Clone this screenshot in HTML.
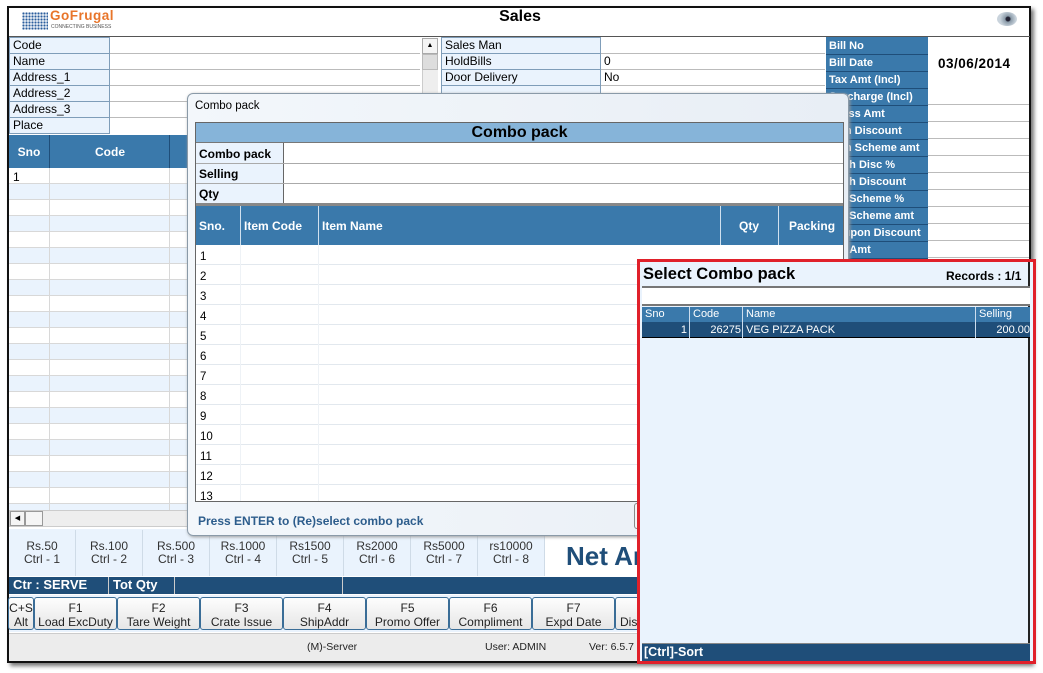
<!DOCTYPE html>
<html><head><meta charset="utf-8">
<style>
*{margin:0;padding:0;box-sizing:border-box}
body{width:1043px;height:673px;background:#fff;position:relative;overflow:hidden;font-family:"Liberation Sans",Tahoma,sans-serif;font-size:11px;color:#000}
.a{position:absolute}
.lb{position:absolute;background:#eaf3fd;border:1px solid #7f9db9;padding-left:3px;line-height:14px;font-size:12px}
.vl{position:absolute;background:#fff;border-bottom:1px solid #bbb;padding-left:3px;line-height:15px;font-size:12px}
.bl{position:absolute;background:#3a79ab;color:#fff;font-weight:bold;border-bottom:1px solid #1f4e79;padding-left:3px;line-height:16px;font-size:11px;white-space:nowrap;overflow:hidden}
.hdr{background:#3a79ab;color:#fff;font-weight:bold}
.den{position:absolute;width:67px;text-align:center;color:#333;font-size:12px;line-height:13px;border-right:1px solid #cfdbe7;height:46px;top:530px;padding-top:10px}
.fk{position:absolute;top:597px;height:33px;border:1px solid #3a6d97;border-radius:3px;background:linear-gradient(#fdfdfd,#e6e6e6);text-align:center;font-size:12px;line-height:14px;padding-top:3px;color:#222;white-space:nowrap;overflow:hidden}
</style></head><body>
<div class="a" style="left:7px;top:6px;width:1024px;height:657px;border:2px solid #111;box-shadow:3px 3px 4px #777;background:#fff"></div>
<div class="a" style="left:22px;top:12px;width:26px;height:18px;background:radial-gradient(circle,#2b5d9c 1px,transparent 1.3px) 0 0/3px 3px"></div>
<div class="a" style="left:50px;top:8px;color:#e8752a;font-weight:bold;font-size:13.5px;letter-spacing:0.5px">GoFrugal</div>
<div class="a" style="left:51px;top:24px;color:#555;font-size:5px">CONNECTING BUSINESS</div>
<div class="a" style="left:480px;top:8px;width:80px;text-align:center;font-weight:bold;font-size:16px">Sales</div>
<div class="a" style="left:997px;top:12px;width:20px;height:14px;border-radius:50%;background:radial-gradient(circle at 55% 50%,#223 2px,#8a9aa8 3px,#c9d3dc 8px)"></div>
<div class="a" style="left:9px;top:36px;width:1021px;height:1px;background:#555"></div>
<div class="lb" style="left:9px;top:37px;width:101px;height:17px">Code</div>
<div class="lb" style="left:9px;top:53px;width:101px;height:17px">Name</div>
<div class="lb" style="left:9px;top:69px;width:101px;height:17px">Address_1</div>
<div class="lb" style="left:9px;top:85px;width:101px;height:17px">Address_2</div>
<div class="lb" style="left:9px;top:101px;width:101px;height:17px">Address_3</div>
<div class="lb" style="left:9px;top:117px;width:101px;height:17px">Place</div>
<div class="a" style="left:110px;top:53px;width:310px;height:1px;background:#bbb"></div>
<div class="a" style="left:110px;top:69px;width:310px;height:1px;background:#bbb"></div>
<div class="a" style="left:110px;top:85px;width:310px;height:1px;background:#bbb"></div>
<div class="a" style="left:110px;top:101px;width:310px;height:1px;background:#bbb"></div>
<div class="a" style="left:110px;top:117px;width:310px;height:1px;background:#bbb"></div>
<div class="a" style="left:422px;top:38px;width:16px;height:96px;background:#eee;border-left:1px solid #ccc"></div>
<div class="a" style="left:422px;top:38px;width:16px;height:16px;background:#f4f4f4;border:1px solid #aaa;font-size:7px;text-align:center;line-height:14px">▲</div>
<div class="a" style="left:422px;top:54px;width:16px;height:16px;background:#ddd;border:1px solid #bbb"></div>
<div class="lb" style="left:441px;top:37px;width:160px;height:17px">Sales Man</div>
<div class="lb" style="left:441px;top:53px;width:160px;height:17px">HoldBills</div>
<div class="lb" style="left:441px;top:69px;width:160px;height:17px">Door Delivery</div>
<div class="lb" style="left:441px;top:85px;width:160px;height:17px"></div>
<div class="vl" style="left:601px;top:38px;width:224px;height:16px"></div>
<div class="vl" style="left:601px;top:54px;width:224px;height:16px">0</div>
<div class="vl" style="left:601px;top:70px;width:224px;height:16px">No</div>
<div class="a" style="left:826px;top:37px;width:102px;height:230px;background:#3a79ab"></div>
<div class="bl" style="left:826px;top:38px;width:102px;height:17px">Bill No</div>
<div class="bl" style="left:826px;top:55px;width:102px;height:17px">Bill Date</div>
<div class="bl" style="left:826px;top:72px;width:102px;height:17px">Tax Amt (Incl)</div>
<div class="bl" style="left:826px;top:89px;width:102px;height:17px">Surcharge (Incl)</div>
<div class="bl" style="left:826px;top:106px;width:102px;height:17px">Gross Amt</div>
<div class="bl" style="left:826px;top:123px;width:102px;height:17px">Item Discount</div>
<div class="bl" style="left:826px;top:140px;width:102px;height:17px">Item Scheme amt</div>
<div class="bl" style="left:826px;top:157px;width:102px;height:17px">Cash Disc %</div>
<div class="bl" style="left:826px;top:174px;width:102px;height:17px">Cash Discount</div>
<div class="bl" style="left:826px;top:191px;width:102px;height:17px">Bill Scheme %</div>
<div class="bl" style="left:826px;top:208px;width:102px;height:17px">Bill Scheme amt</div>
<div class="bl" style="left:826px;top:225px;width:102px;height:17px">Coupon Discount</div>
<div class="bl" style="left:826px;top:242px;width:102px;height:17px">Net Amt</div>
<div class="a" style="left:938px;top:56px;font-weight:bold;font-size:13.5px;letter-spacing:0.5px">03/06/2014</div>
<div class="a" style="left:928px;top:88px;width:101px;height:170px;background:repeating-linear-gradient(#fff 0 16px,#bbb 16px 17px)"></div>
<div class="a hdr" style="left:9px;top:135px;width:180px;height:33px"></div>
<div class="a" style="left:9px;top:145px;width:40px;text-align:center;color:#fff;font-weight:bold;font-size:12px">Sno</div>
<div class="a" style="left:49px;top:135px;width:1px;height:33px;background:#1f4e79"></div>
<div class="a" style="left:50px;top:145px;width:120px;text-align:center;color:#fff;font-weight:bold;font-size:12px">Code</div>
<div class="a" style="left:169px;top:135px;width:1px;height:33px;background:#1f4e79"></div>
<div class="a" style="left:9px;top:168px;width:180px;height:342px;background:repeating-linear-gradient(#fff 0 15px,#d8d8d8 15px 16px,#eaf3fd 16px 31px,#d8d8d8 31px 32px)"></div>
<div class="a" style="left:49px;top:168px;width:1px;height:342px;background:#d8d8d8"></div>
<div class="a" style="left:169px;top:168px;width:1px;height:342px;background:#d8d8d8"></div>
<div class="a" style="left:13px;top:170px;font-size:12px">1</div>
<div class="a" style="left:9px;top:510px;width:180px;height:17px;background:#eee;border:1px solid #ccc"></div>
<div class="a" style="left:10px;top:511px;width:15px;height:15px;background:#f5f5f5;border:1px solid #999;font-size:7px;line-height:13px;text-align:center">◀</div>
<div class="a" style="left:25px;top:511px;width:18px;height:15px;background:#f5f5f5;border:1px solid #999"></div>
<div class="a" style="left:9px;top:529px;width:536px;height:47px;background:#eaf3fd"></div>
<div class="den" style="left:9px">Rs.50<br>Ctrl - 1</div>
<div class="den" style="left:76px">Rs.100<br>Ctrl - 2</div>
<div class="den" style="left:143px">Rs.500<br>Ctrl - 3</div>
<div class="den" style="left:210px">Rs.1000<br>Ctrl - 4</div>
<div class="den" style="left:277px">Rs1500<br>Ctrl - 5</div>
<div class="den" style="left:344px">Rs2000<br>Ctrl - 6</div>
<div class="den" style="left:411px">Rs5000<br>Ctrl - 7</div>
<div class="den" style="left:478px">rs10000<br>Ctrl - 8</div>
<div class="a" style="left:566px;top:541px;color:#1f4e79;font-weight:bold;font-size:26px">Net Amt</div>
<div class="a" style="left:9px;top:577px;width:628px;height:17px;background:#1f4e79"></div>
<div class="a" style="left:13px;top:577px;color:#fff;font-weight:bold;font-size:13px">Ctr : SERVE</div>
<div class="a" style="left:108px;top:577px;width:1px;height:17px;background:#ccc"></div>
<div class="a" style="left:113px;top:577px;color:#fff;font-weight:bold;font-size:13px">Tot Qty</div>
<div class="a" style="left:174px;top:577px;width:1px;height:17px;background:#ccc"></div>
<div class="a" style="left:342px;top:577px;width:1px;height:17px;background:#ccc"></div>
<div class="a" style="left:9px;top:595px;width:628px;height:37px;background:#eaf3fd"></div>
<div class="fk" style="left:8px;width:26px">C+S<br>Alt</div>
<div class="fk" style="left:34px;width:83px">F1<br>Load ExcDuty</div>
<div class="fk" style="left:117px;width:83px">F2<br>Tare Weight</div>
<div class="fk" style="left:200px;width:83px">F3<br>Crate Issue</div>
<div class="fk" style="left:283px;width:83px">F4<br>ShipAddr</div>
<div class="fk" style="left:366px;width:83px">F5<br>Promo Offer</div>
<div class="fk" style="left:449px;width:83px">F6<br>Compliment</div>
<div class="fk" style="left:532px;width:83px">F7<br>Expd Date</div>
<div class="fk" style="left:615px;width:40px;text-align:left;padding-left:4px"><br>Dis</div>
<div class="a" style="left:9px;top:633px;width:1020px;height:28px;background:#ececec;border-top:1px solid #ccc"></div>
<div class="a" style="left:307px;top:641px;font-size:10.5px;color:#222">(M)-Server</div>
<div class="a" style="left:485px;top:641px;font-size:10.5px;color:#222">User: ADMIN</div>
<div class="a" style="left:589px;top:641px;font-size:10.5px;color:#222">Ver: 6.5.7</div>

<div class="a" style="left:187px;top:93px;width:662px;height:443px;background:linear-gradient(90deg,#f3f7fb,#e8eef5);border:1px solid #8a9aa8;border-radius:6px;box-shadow:1px 1px 3px #999"></div>
<div class="a" style="left:195px;top:100px;font-size:11.5px">Combo pack</div>
<div class="a" style="left:195px;top:122px;width:649px;height:380px;background:#fff;border:1px solid #666"></div>
<div class="a" style="left:196px;top:123px;width:647px;height:20px;background:#86b4d9;border-bottom:1px solid #777;text-align:center;font-weight:bold;font-size:16px;line-height:19px">Combo pack</div>
<div class="a" style="left:196px;top:143px;width:88px;height:61px;background:#eaf3fd;border-right:1px solid #666"></div>
<div class="a" style="left:196px;top:163px;width:647px;height:1px;background:#aaa"></div>
<div class="a" style="left:196px;top:183px;width:647px;height:1px;background:#aaa"></div>
<div class="a" style="left:196px;top:203px;width:647px;height:3px;background:#888"></div>
<div class="a" style="left:199px;top:147px;font-weight:bold;font-size:12px">Combo pack</div>
<div class="a" style="left:199px;top:167px;font-weight:bold;font-size:12px">Selling</div>
<div class="a" style="left:199px;top:187px;font-weight:bold;font-size:12px">Qty</div>
<div class="a hdr" style="left:196px;top:206px;width:647px;height:39px"></div>
<div class="a" style="left:240px;top:206px;width:1px;height:39px;background:#cfe0ef"></div>
<div class="a" style="left:318px;top:206px;width:1px;height:39px;background:#cfe0ef"></div>
<div class="a" style="left:720px;top:206px;width:1px;height:39px;background:#cfe0ef"></div>
<div class="a" style="left:778px;top:206px;width:1px;height:39px;background:#cfe0ef"></div>
<div class="a" style="left:199px;top:219px;color:#fff;font-weight:bold;font-size:12px">Sno.</div>
<div class="a" style="left:244px;top:219px;color:#fff;font-weight:bold;font-size:12px">Item Code</div>
<div class="a" style="left:322px;top:219px;color:#fff;font-weight:bold;font-size:12px">Item Name</div>
<div class="a" style="left:739px;top:219px;color:#fff;font-weight:bold;font-size:12px">Qty</div>
<div class="a" style="left:789px;top:219px;color:#fff;font-weight:bold;font-size:12px">Packing</div>
<div class="a" style="left:196px;top:245px;width:647px;height:256px;background:repeating-linear-gradient(#fff 0 19px,#e2e8ee 19px 20px)"></div>
<div class="a" style="left:240px;top:245px;width:1px;height:256px;background:#eef2f6"></div>
<div class="a" style="left:318px;top:245px;width:1px;height:256px;background:#eef2f6"></div>
<div class="a" style="left:200px;top:247px;line-height:20px;font-size:11.5px">1<br>2<br>3<br>4<br>5<br>6<br>7<br>8<br>9<br>10<br>11<br>12<br>13</div>
<div class="a" style="left:196px;top:501px;width:647px;height:1px;background:#666"></div>
<div class="a" style="left:198px;top:514px;color:#2d5d8c;font-weight:bold;font-size:12px">Press ENTER to (Re)select combo pack</div>
<div class="a" style="left:634px;top:503px;width:12px;height:26px;border:1px solid #888;border-radius:3px;background:#f5f5f5"></div>

<div class="a" style="left:637px;top:259px;width:399px;height:405px;border:3px solid #e0202a;background:#eaf3fd"></div>
<div class="a" style="left:642px;top:262px;width:388px;height:398px;background:#eaf3fd;border-right:2px solid #222"></div>
<div class="a" style="left:643px;top:265px;font-weight:bold;font-size:16.5px">Select Combo pack</div>
<div class="a" style="left:946px;top:269px;font-weight:bold;font-size:12px">Records : 1/1</div>
<div class="a" style="left:642px;top:286px;width:388px;height:20px;background:#fff;border-top:2px solid #777;border-bottom:2px solid #777"></div>
<div class="a" style="left:642px;top:307px;width:388px;height:15px;background:#3a79ab"></div>
<div class="a" style="left:642px;top:322px;width:388px;height:16px;background:#1f4e79;border-bottom:1px solid #000"></div>
<div class="a" style="left:689px;top:307px;width:1px;height:31px;background:#cde"></div>
<div class="a" style="left:742px;top:307px;width:1px;height:31px;background:#cde"></div>
<div class="a" style="left:975px;top:307px;width:1px;height:31px;background:#cde"></div>
<div class="a" style="left:645px;top:308px;color:#fff;font-size:11px">Sno</div>
<div class="a" style="left:693px;top:308px;color:#fff;font-size:11px">Code</div>
<div class="a" style="left:746px;top:308px;color:#fff;font-size:11px">Name</div>
<div class="a" style="left:979px;top:308px;color:#fff;font-size:11px">Selling</div>
<div class="a" style="left:642px;top:324px;width:45px;text-align:right;color:#fff;font-size:11px">1</div>
<div class="a" style="left:690px;top:324px;width:51px;text-align:right;color:#fff;font-size:11px">26275</div>
<div class="a" style="left:746px;top:324px;color:#fff;font-size:11px">VEG PIZZA PACK</div>
<div class="a" style="left:976px;top:324px;width:54px;text-align:right;color:#fff;font-size:11px;overflow:hidden;white-space:nowrap">200.00</div>
<div class="a" style="left:642px;top:643px;width:388px;height:18px;background:#1f4e79;border-top:1px solid #888"></div>
<div class="a" style="left:644px;top:645px;color:#fff;font-weight:bold;font-size:12.5px">[Ctrl]-Sort</div>
</body></html>
